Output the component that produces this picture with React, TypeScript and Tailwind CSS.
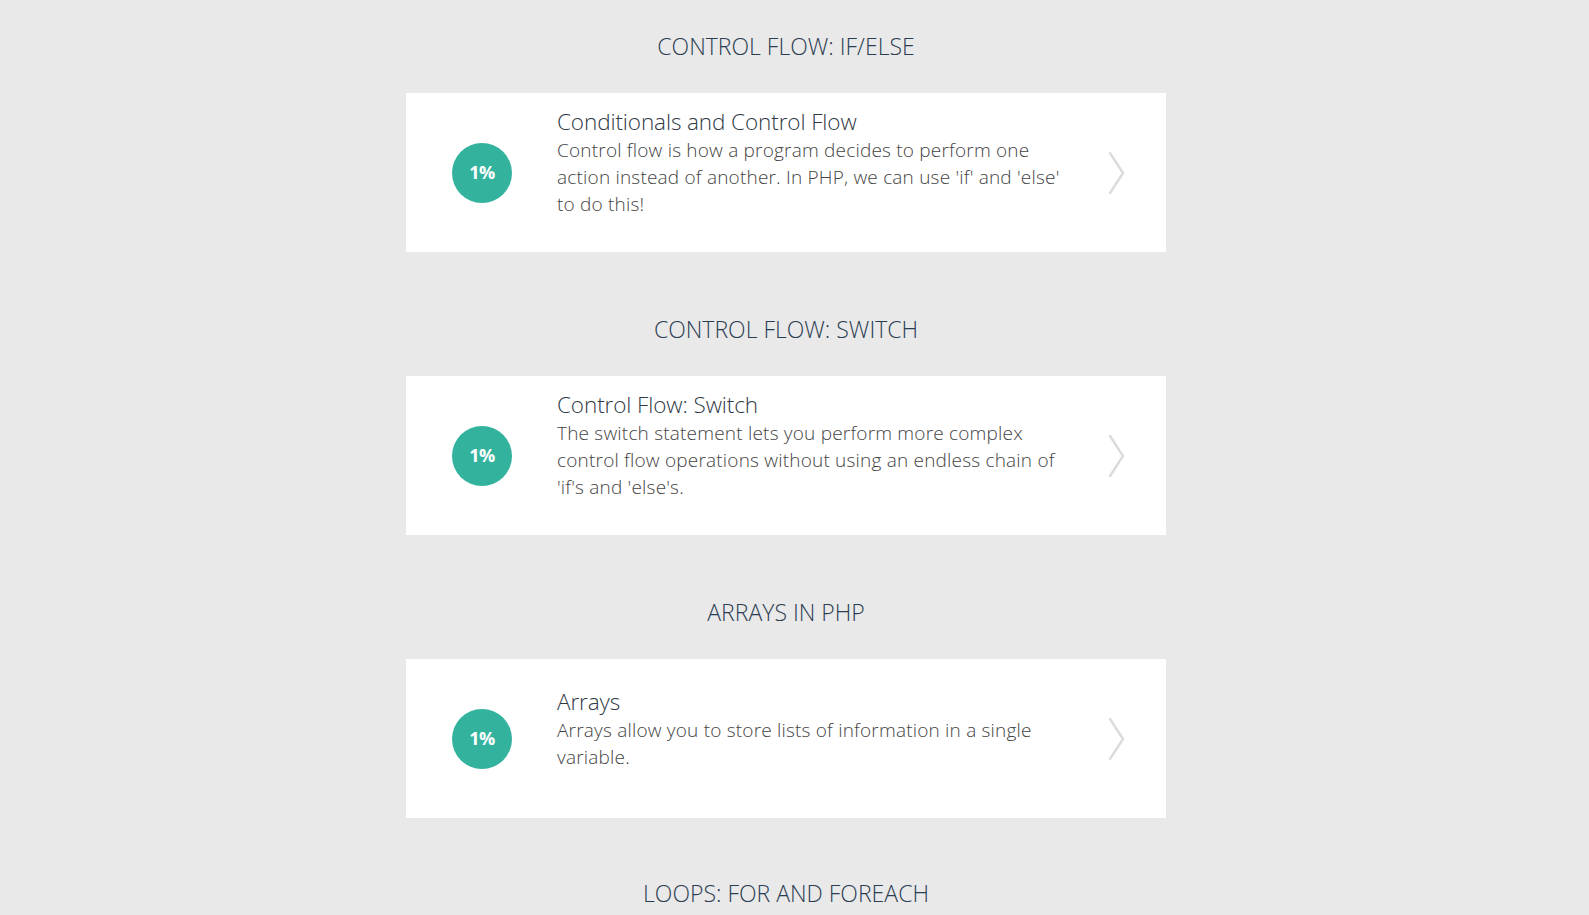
const lessons = [
  {
    section: 'Control Flow: If/Else',
    title: 'Conditionals and Control Flow',
    text: "Control flow is how a program decides to perform one action instead of another. In PHP, we can use 'if' and 'else' to do this!",
  },
  {
    section: 'Control Flow: Switch',
    title: 'Control Flow: Switch',
    text: "The switch statement lets you perform more complex control flow operations without using an endless chain of 'if's and 'else's.",
  },
  {
    section: 'Arrays in PHP',
    title: 'Arrays',
    text: 'Arrays allow you to store lists of information in a single variable.',
  },
];

function Chevron() {
  return (
    <svg width="18" height="42" viewBox="0 0 18 42" fill="none">
      <path d="M2 1 L15 21 L2 41" stroke="#dcdcdc" strokeWidth="2.5" strokeLinecap="round" strokeLinejoin="round" />
    </svg>
  );
}

function LessonCard({ title, text }: { title: string; text: string }) {
  return (
    <div className="flex h-[159px] w-[760px] items-center bg-white">
      <div className="ml-[46px] flex h-[60px] w-[60px] shrink-0 items-center justify-center rounded-full bg-[#33b39e]">
        <span className="text-[18px] font-bold tracking-[-0.6px] text-white">1%</span>
      </div>
      <div className="ml-[45px] w-[512px] pb-5">
        <h3 className="text-[22.5px] leading-[30px] font-light tracking-[-0.1px] text-[#2f3a45]">{title}</h3>
        <p className="text-[19px] leading-[27px] font-light tracking-[0.2px] text-[#444]">{text}</p>
      </div>
      <div className="ml-auto mr-[40px]">
        <Chevron />
      </div>
    </div>
  );
}

export default function App() {
  return (
    <div
      className="min-h-screen bg-[#e9e9e9] pr-[17px]"
      style={{ fontFamily: '"Open Sans", "Noto Sans", sans-serif' }}
    >
      <div className="flex flex-col items-center pt-[31px]">
        {lessons.map((l) => (
          <section key={l.section} className="flex flex-col items-center pb-[62px]">
            <h2 className="text-[23px] leading-[30px] font-light uppercase text-[#2b3d52]">{l.section}</h2>
            <div className="mt-[32px]">
              <LessonCard title={l.title} text={l.text} />
            </div>
          </section>
        ))}
        <h2 className="-mt-[2px] text-[23px] leading-[30px] font-light uppercase text-[#2b3d52]">Loops: For and Foreach</h2>
      </div>
    </div>
  );
}
